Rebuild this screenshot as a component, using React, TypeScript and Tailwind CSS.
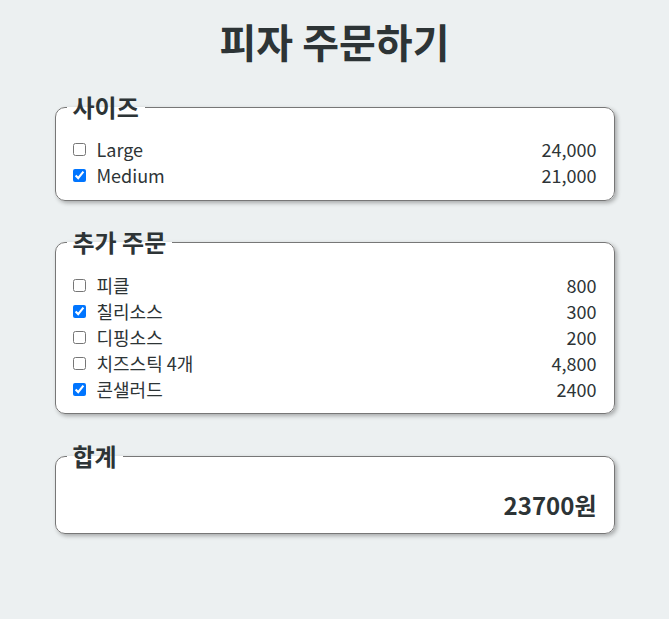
import React from "react";

type Item = { name: string; price: string; checked: boolean };

const sizes: Item[] = [
  { name: "Large", price: "24,000", checked: false },
  { name: "Medium", price: "21,000", checked: true },
];

const extras: Item[] = [
  { name: "피클", price: "800", checked: false },
  { name: "칠리소스", price: "300", checked: true },
  { name: "디핑소스", price: "200", checked: false },
  { name: "치즈스틱 4개", price: "4,800", checked: false },
  { name: "콘샐러드", price: "2400", checked: true },
];

function Box({ title, children, className }: { title: string; children: React.ReactNode; className?: string }) {
  return (
    <fieldset
      className={`rounded-[10px] border border-[#777] bg-white pl-[17px] pr-[17px] shadow-[2px_2px_4px_rgba(0,0,0,0.3)] ${className ?? ""}`}
    >
      <legend className="-ml-[6px] px-[6px] text-[24px] font-bold leading-[32px]">{title}</legend>
      {children}
    </fieldset>
  );
}

function Rows({ items }: { items: Item[] }) {
  return (
    <ul>
      {items.map((it) => (
        <li key={it.name} className="flex h-[26px] items-center justify-between text-[18px]">
          <label className="flex items-center gap-[11px]">
            <input type="checkbox" defaultChecked={it.checked} className="m-0 h-[13px] w-[13px]" />
            <span>{it.name}</span>
          </label>
          <span>{it.price}</span>
        </li>
      ))}
    </ul>
  );
}

export default function App() {
  return (
    <div
      className="min-h-[619px] bg-[#ecf0f1] pt-3 text-[#2d3436]"
      style={{ fontFamily: '"Noto Sans CJK KR", "Noto Sans", sans-serif' }}
    >
      <div className="mx-auto w-[560px]">
        <h1 className="text-center text-[40px] font-bold leading-[58px]">피자 주문하기</h1>

        <Box title="사이즈" className="mt-[21px] pb-[12px]">
          <div className="pt-[13px]">
            <Rows items={sizes} />
          </div>
        </Box>

        <Box title="추가 주문" className="mt-[25px] pb-[11px]">
          <div className="pt-[14px]">
            <Rows items={extras} />
          </div>
        </Box>

        <Box title="합계" className="mt-[26px] pb-[12px]">
          <div className="pt-[17px] text-right text-[24px] font-bold leading-[32px]">23700원</div>
        </Box>
      </div>
    </div>
  );
}
